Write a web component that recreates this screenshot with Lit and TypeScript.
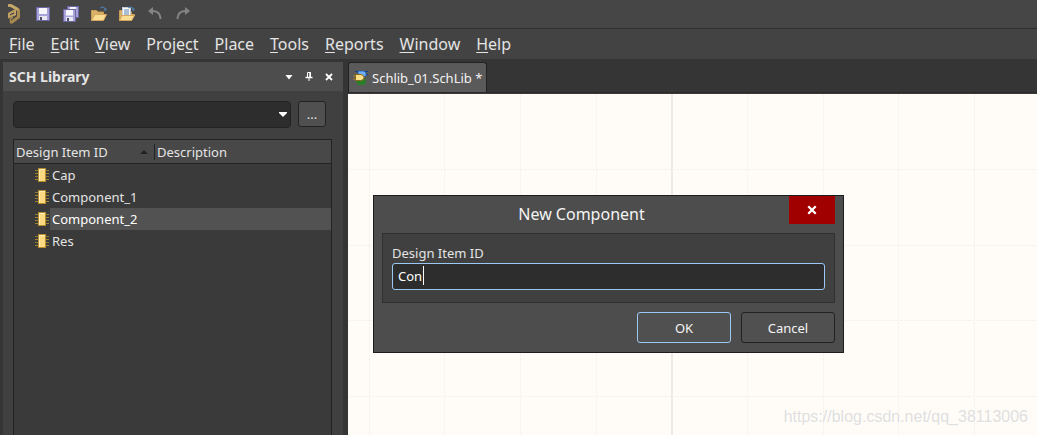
import { LitElement, html, svg, css } from "lit";
import { customElement, state } from "lit/decorators.js";

const MENUS: [string, string, string][] = [
  ["", "F", "ile"],
  ["", "E", "dit"],
  ["", "V", "iew"],
  ["Proje", "c", "t"],
  ["", "P", "lace"],
  ["", "T", "ools"],
  ["", "R", "eports"],
  ["", "W", "indow"],
  ["", "H", "elp"],
];

const PITCH = 227 / 3;

const logo = svg`<svg width="14" height="20" viewBox="0 0 14 20">
  <path d="M1.500 1.500 H4 L11.500 6 V13 L5 18 H3" fill="none" stroke="#a88a50" stroke-width="3"/>
  <path d="M1 1.500 H4 L11 5.500" fill="none" stroke="#c6aa6c" stroke-width="2.600"/>
  <path d="M8 6.500 L2 9.500 V13 L8 10.500 V5.500" fill="none" stroke="#bfa262" stroke-width="2"/>
  <path d="M3.500 18.500 V14.500 L6 13.500" fill="none" stroke="#a88a50" stroke-width="1.500"/>
</svg>`;

const disk = (x: number, y: number, s: number) => svg`<g transform="translate(${x} ${y})">
  <rect x="0.5" y="0.5" width=${s - 1} height=${s - 1} fill="#a9a3dc" stroke="#6a67a3"/>
  <rect x="3" y="1" width=${s - 6} height=${s / 2 - 1} fill="#f7f7fb"/>
  <rect x="3" y=${s - 5} width=${s - 6} height="4" fill="#e8e8f2"/>
  <rect x="4" y=${s - 4} width="2" height="3" fill="#4b4b62"/>
</g>`;

const save = svg`<svg width="16" height="16" viewBox="0 0 16 16">${disk(1, 1, 14)}</svg>`;
const saveAll = svg`<svg width="16" height="16" viewBox="0 0 16 16">${disk(4, 0, 12)}${disk(0, 3, 13)}</svg>`;
const folder = svg`
  <path d="M0.5 14.5 V4.5 H5.5 L7 6 H12.5 V9" fill="#d9b168" stroke="#c99d55"/>
  <path d="M0.5 14.5 L4 8.5 H15.5 L12.5 14.5 Z" fill="#fbdc93" stroke="#d5a65c"/>`;
const arrow = svg`<path d="M9.5 2 C11.5 0.5 13.5 1 14.5 3.5" fill="none" stroke="#4d7ea6" stroke-width="1.2"/>
  <path d="M12.6 3 L16 2.6 L14.6 5.6 Z" fill="#4d7ea6"/>`;
const openFile = svg`<svg width="16" height="16" viewBox="0 0 16 16">${folder}${arrow}</svg>`;
const openDoc = svg`<svg width="16" height="16" viewBox="0 0 16 16">${folder}
  <rect x="3.5" y="1.5" width="8" height="9" fill="#fafafa" stroke="#c7d0da"/>
  <path d="M5 4 H10 M5 6 H10 M5 8 H10" stroke="#5b83b3"/>
  <path d="M0.5 14.5 L3 9.5 H15.5 L12.5 14.5 Z" fill="#fbdc93" stroke="#d5a65c"/>${arrow}</svg>`;
const undo = svg`<svg width="16" height="16" viewBox="0 0 16 16">
  <path d="M4 5 C10 4.5 13 7 13.500 13" fill="none" stroke="#858585" stroke-width="2"/>
  <path d="M1 5 L6 1 V9 Z" fill="#858585"/></svg>`;
const redo = svg`<svg width="16" height="16" viewBox="0 0 16 16">
  <path d="M12 5 C6 4.500 3 7 2.500 13" fill="none" stroke="#858585" stroke-width="2"/>
  <path d="M15 5 L10 1 V9 Z" fill="#858585"/></svg>`;
const cross = (size: number) => svg`<svg width=${size} height=${size} viewBox="0 0 8 8">
  <path d="M1 1 L7 7 M7 1 L1 7" stroke="#fff" stroke-width="1.8"/></svg>`;
const chip = svg`<svg width="14" height="14" viewBox="0 0 14 14">
  <path d="M0 2.5 H14 M0 8.5 H14" stroke="#8d7a35"/>
  <path d="M0 5.5 H14 M0 11.5 H14" stroke="#a3852f"/>
  <rect x="3.5" y="0.5" width="7" height="13" fill="#fbd983" stroke="#b78c2c"/>
  <path d="M4.500 13 V1.500 H10" fill="none" stroke="#fdeebd"/></svg>`;
const docIcon = svg`<svg width="16" height="16" viewBox="0 0 16 16">
  <path d="M4 9 H13 V13 L11 15 H5 L3 12 Z" fill="#2c7d2a"/>
  <path d="M2 1.500 H15 M12 4.500 H15" stroke="#123f8c" stroke-width="1.200"/>
  <path d="M5 1 H11 Q14 2 13 6 L10 7 L5 4 Z" fill="#6fb0f5" stroke="#1c56ad" stroke-width="0.800"/>
  <path d="M0 6 H3 M0 9 H3" stroke="#a8842a" stroke-width="1.200"/>
  <path d="M2.500 4.500 H8 Q11 5 11 7.500 Q11 10 8 10.500 H2.500 Z" fill="#fbe08a" stroke="#8a6a1a"/></svg>`;

@customElement("app-root")
export class AppRoot extends LitElement {
  @state() private items = ["Cap", "Component_1", "Component_2", "Res"];
  @state() private selected = 2;

  static styles = css`
    * { box-sizing: border-box; }
    :host {
      display: flex;
      flex-direction: column;
      height: 100vh;
      overflow: hidden;
      background: #353535;
      color: #e4e4e4;
      font: 13px/22px "Noto Sans", "Open Sans", sans-serif;
    }
    svg { display: block; }
    button, input, select { font: inherit; color: inherit; margin: 0; padding: 0; outline: none; }
    .plain { background: none; border: 0; }
    .toolbar {
      display: flex;
      align-items: center;
      gap: 12px;
      flex: none;
      height: 29px;
      padding-left: 7px;
      background: #464646;
      border-bottom: 1px solid #2f2f2f;
    }
    .brand { margin-right: 2px; }
    .menubar {
      display: flex;
      gap: 16px;
      flex: none;
      height: 30px;
      padding-left: 9px;
      background: #434343;
      font-size: 16px;
      line-height: 30px;
    }
    .menubar u { text-underline-offset: 2px; text-decoration-thickness: 1px; text-decoration-skip-ink: none; }
    .workspace { display: flex; flex: 1; min-height: 0; gap: 5px; padding: 3px 0 0 3px; }
    .panel { display: flex; flex-direction: column; width: 340px; flex: none; background: #404040; }
    .panel-head {
      display: flex;
      align-items: center;
      gap: 12px;
      height: 29px;
      padding: 0 10px 0 6px;
      background: #4d4d4d;
    }
    .panel-head h2 { flex: 1; margin: 0; font-size: 14px; font-weight: 700; }
    .filter { display: flex; gap: 7px; padding: 10px 17px 0 10px; }
    .combo { position: relative; flex: 1; }
    .combo select {
      display: block;
      width: 100%;
      height: 27px;
      appearance: none;
      background: #2d2d2d;
      border: 1px solid #222;
      border-radius: 4px;
    }
    .combo svg { position: absolute; right: 4px; top: 11px; pointer-events: none; }
    .more {
      width: 28px;
      height: 26px;
      background: #505050;
      border: 1px solid #222;
      border-radius: 3px;
      line-height: 24px;
    }
    .list { flex: 1; margin: 11px 11px 0 10px; border: 1px solid #232323; border-bottom: 0; background: #3a3a3a; }
    table { width: 100%; border-spacing: 0; table-layout: fixed; }
    th {
      height: 24px;
      padding: 1px 0 0 2px;
      background: #484848;
      border-bottom: 1px solid #232323;
      font-weight: 400;
      line-height: 22px;
      text-align: left;
    }
    .id-col { width: 141px; }
    .sort { display: flex; align-items: center; justify-content: space-between; height: 16px; padding-right: 6px; border-right: 1px solid #232323; }
    td { height: 22px; padding: 0; }
    .item { display: flex; align-items: center; gap: 1px; padding-left: 21px; line-height: 22px; }
    .item span { flex: 1; padding-left: 2px; }
    .on td, .on span { background: #525252; color: #fff; }
    .on td:first-child { background: none; }
    .editor { display: flex; flex-direction: column; flex: 1; min-width: 0; }
    .tabs { display: flex; height: 31px; align-items: flex-start; border-bottom: 1px solid #2b2b2b; }
    .tab {
      display: flex;
      align-items: center;
      gap: 3px;
      height: 30px;
      padding: 0 4px;
      background: #5a5a5a;
      border: 1px solid #222;
      border-bottom: 0;
      border-radius: 3px 3px 0 0;
      color: #f2f2f2;
    }
    .canvas { position: relative; flex: 1; overflow: hidden; background: #fffcf7; border-top: 1px solid #3a3a3a; }
    .grid { width: 100%; height: 100%; }
    .mark {
      position: absolute;
      right: 9px;
      bottom: 6px;
      color: #e0dfdd;
      font: 16px/24px "Liberation Sans", Arial, sans-serif;
      text-shadow: 1px 1px 0 #fff;
    }
    .dialog {
      position: absolute;
      left: 25px;
      top: 101px;
      width: 471px;
      padding: 0 8px 9px;
      background: #4d4d4d;
      border: 1px solid #1c1c1c;
    }
    .title { display: grid; grid-template-columns: 1fr 46px; height: 37px; }
    .title h1 { margin: 0; padding-right: 8px; font-size: 16px; font-weight: 400; line-height: 37px; text-align: center; color: #f4f4f4; }
    .close { display: grid; place-items: center; height: 28px; background: #a00000; border: 0; }
    .group { padding: 9px 9px 12px; background: #404040; border: 1px solid #303030; }
    .group label { display: block; line-height: 20px; }
    .entry { position: relative; }
    .caret { position: absolute; left: 31px; top: 3px; width: 1px; height: 19px; background: #fff; pointer-events: none; }
    .field:focus + .caret { display: none; }
    .field {
      display: block;
      width: 100%;
      height: 27px;
      padding: 0 5px 2px;
      background: #2d2d2d;
      border: 1px solid #9cc8f5;
      border-radius: 3px;
      color: #fff;
    }
    .actions { display: flex; justify-content: flex-end; gap: 10px; padding-top: 9px; }
    .actions button { width: 94px; height: 31px; background: #505050; border: 1px solid #222; border-radius: 3px; color: #f4f4f4; }
    .actions .primary { border-color: #9cc8f5; }
  `;

  private grid() {
    const n = Array.from({ length: 40 }, (_, i) => i);
    return html`<svg class="grid" aria-hidden="true">
      ${n.map((i) => {
        const x = Math.round(20.5 + i * PITCH);
        return i % 10 === 4
          ? svg`<line x1=${x + 1} y1="0" x2=${x + 1} y2="100%" stroke="#ecebe7" stroke-width="2"/>`
          : svg`<line x1=${x + 0.5} y1="0" x2=${x + 0.5} y2="100%" stroke="#f3f2ef" stroke-dasharray="3 1"/>`;
      })}
      ${n.map((i) => {
        const y = Math.round(75 + i * PITCH) + 0.5;
        return svg`<line x1="0" y1=${y} x2="100%" y2=${y} stroke="#f3f2ef" stroke-dasharray="3 1"/>`;
      })}
    </svg>`;
  }

  render() {
    return html`
      <header class="toolbar">
        <span class="brand">${logo}</span>
        <button class="plain" aria-label="Save">${save}</button>
        <button class="plain" aria-label="Save All">${saveAll}</button>
        <button class="plain" aria-label="Open">${openFile}</button>
        <button class="plain" aria-label="Open Document">${openDoc}</button>
        <button class="plain" aria-label="Undo">${undo}</button>
        <button class="plain" aria-label="Redo">${redo}</button>
      </header>
      <nav class="menubar">
        ${MENUS.map(([a, k, b]) => html`<button class="plain">${a}<u>${k}</u>${b}</button>`)}
      </nav>
      <main class="workspace">
        <section class="panel">
          <div class="panel-head">
            <h2>SCH Library</h2>
            <button class="plain" aria-label="Panel menu">
              <svg width="8" height="8" viewBox="0 0 8 8"><path d="M0.500 2 H7.500 L4 6.500 Z" fill="#fff"/></svg>
            </button>
            <button class="plain" aria-label="Pin">
              <svg width="8" height="9" viewBox="0 0 8 9"><path d="M2.500 5 V0.500 H5.500 V5 M4 5 V9" fill="none" stroke="#fff"/><path d="M5 0 V5 M0.500 5.500 H7.500" stroke="#fff" stroke-width="1.500"/></svg>
            </button>
            <button class="plain" aria-label="Close panel">${cross(8)}</button>
          </div>
          <div class="filter">
            <div class="combo">
              <select aria-label="Filter"><option></option></select>
              <svg width="8" height="5" viewBox="0 0 8 5"><path d="M0 0 H8 V1 L4 5 L0 1 Z" fill="#fff"/></svg>
            </div>
            <button class="more" aria-label="More filters">...</button>
          </div>
          <div class="list">
            <table>
              <thead>
                <tr>
                  <th class="id-col"><div class="sort">Design Item ID
                    <svg width="8" height="4" viewBox="0 0 8 4"><path d="M4 0 L8 4 H0 Z" fill="#222"/></svg></div></th>
                  <th>Description</th>
                </tr>
              </thead>
              <tbody>
                ${this.items.map((name, i) => html`
                  <tr class=${i === this.selected ? "on" : ""} @click=${() => (this.selected = i)}>
                    <td><div class="item">${chip}<span>${name}</span></div></td>
                    <td></td>
                  </tr>`)}
              </tbody>
            </table>
          </div>
        </section>
        <section class="editor">
          <div class="tabs">
            <button class="tab">${docIcon}Schlib_01.SchLib *</button>
          </div>
          <div class="canvas">
            ${this.grid()}
            <span class="mark">https://blog.csdn.net/qq_38113006</span>
            <form class="dialog" role="dialog" aria-labelledby="title" @submit=${(e: Event) => e.preventDefault()}>
              <div class="title">
                <h1 id="title">New Component</h1>
                <button type="button" class="close" aria-label="Close">${cross(10)}</button>
              </div>
              <div class="group">
                <label for="item-id">Design Item ID</label>
                <div class="entry">
                  <input id="item-id" class="field" type="text" value="Con" />
                  <span class="caret"></span>
                </div>
              </div>
              <div class="actions">
                <button class="primary">OK</button>
                <button type="button">Cancel</button>
              </div>
            </form>
          </div>
        </section>
      </main>
    `;
  }
}
